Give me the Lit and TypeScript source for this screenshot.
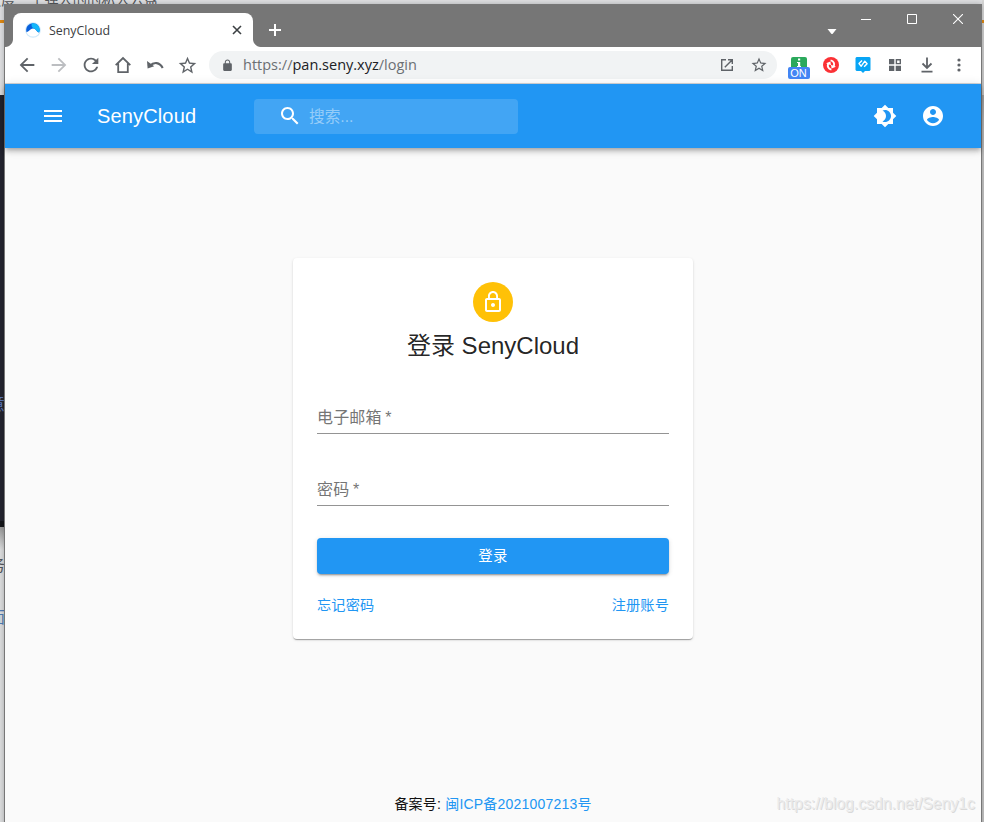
import { LitElement, html, css, svg } from "lit";
import { customElement } from "lit/decorators.js";

const STAR = "M22 9.24l-7.19-.62L12 2 9.19 8.63 2 9.24l5.46 4.73L5.82 21 12 17.27 18.18 21l-1.63-7.03L22 9.24zM12 15.4l-3.76 2.27 1-4.28-3.32-2.88 4.38-.38L12 6.1l1.71 4.04 4.38.38-3.32 2.88 1 4.28L12 15.4z";
const icon = (d: string, size = 24) =>
  html`<svg width=${size} height=${size} viewBox="0 0 24 24" fill="currentColor">${svg`<path d=${d} />`}</svg>`;

const ICONS = {
  back: "M20 11H7.83l5.59-5.59L12 4l-8 8 8 8 1.41-1.41L7.83 13H20v-2z",
  forward: "M12 4l-1.41 1.41L16.17 11H4v2h12.17l-5.58 5.59L12 20l8-8z",
  reload: "M17.65 6.35C16.2 4.9 14.21 4 12 4c-4.42 0-7.99 3.58-7.99 8s3.57 8 7.99 8c3.73 0 6.84-2.55 7.73-6h-2.08c-.82 2.33-3.04 4-5.65 4-3.31 0-6-2.69-6-6s2.69-6 6-6c1.66 0 3.14.69 4.22 1.78L13 11h7V4l-2.35 2.35z",
  lock: "M18 8h-1V6c0-2.76-2.24-5-5-5S7 3.24 7 6v2H6c-1.1 0-2 .9-2 2v10c0 1.1.9 2 2 2h12c1.1 0 2-.9 2-2V10c0-1.1-.9-2-2-2zM8.9 8V6c0-1.71 1.39-3.1 3.1-3.1s3.1 1.39 3.1 3.1v2H8.9z",
  menu: "M3 18h18v-2H3v2zm0-5h18v-2H3v2zm0-7v2h18V6H3z",
  search: "M15.5 14h-.79l-.28-.27C15.41 12.59 16 11.11 16 9.5 16 5.91 13.09 3 9.5 3S3 5.91 3 9.5 5.91 16 9.5 16c1.61 0 3.09-.59 4.23-1.57l.27.28v.79l5 4.99L20.49 19l-4.99-5zm-6 0C7.01 14 5 11.99 5 9.5S7.01 5 9.5 5 14 7.01 14 9.5 11.99 14 9.5 14z",
  brightness: "M20 8.69V4h-4.69L12 .69 8.69 4H4v4.69L.69 12 4 15.31V20h4.69L12 23.31 15.31 20H20v-4.69L23.31 12 20 8.69zM12 18c-.89 0-1.74-.2-2.5-.55C11.56 16.5 13 14.42 13 12s-1.44-4.5-3.5-5.45C10.26 6.2 11.11 6 12 6c3.31 0 6 2.69 6 6s-2.69 6-6 6z",
  account: "M12 2C6.48 2 2 6.48 2 12s4.48 10 10 10 10-4.48 10-10S17.52 2 12 2zm0 3c1.66 0 3 1.34 3 3s-1.34 3-3 3-3-1.34-3-3 1.34-3 3-3zm0 14.2c-2.5 0-4.71-1.28-6-3.22.03-1.99 4-3.08 6-3.08 1.99 0 5.97 1.09 6 3.08-1.29 1.94-3.5 3.22-6 3.22z",
  lockOutline: "M12 17c1.1 0 2-.9 2-2s-.9-2-2-2-2 .9-2 2 .9 2 2 2zm6-9h-1V6c0-2.76-2.24-5-5-5S7 3.24 7 6v2H6c-1.1 0-2 .9-2 2v10c0 1.1.9 2 2 2h12c1.1 0 2-.9 2-2V10c0-1.1-.9-2-2-2zM8.9 6c0-1.71 1.39-3.1 3.1-3.1s3.1 1.39 3.1 3.1v2H8.9V6zM18 20H6V10h12v10z",
};

@customElement("browser-chrome")
export class BrowserChrome extends LitElement {
  static styles = css`
    :host { display: block; font-family: "Open Sans", "Noto Sans CJK SC", sans-serif; }
    svg { display: block; flex: none; }
    .tabs { height: 42px; background: #767676; display: flex; color: #fff; padding-left: 8px; }
    .tab { width: 240px; height: 34px; margin-top: 8px; box-sizing: border-box; background: #fff; border-radius: 8px 8px 0 0;
      display: flex; align-items: center; padding: 0 11px 0 12px; color: #3c4043; font-size: 12.4px; position: relative; }
    .tab::before, .tab::after { content: ""; position: absolute; bottom: 0; width: 8px; height: 8px; }
    .tab::before { left: -8px; background: radial-gradient(circle at 0 0, transparent 7.5px, #fff 8.5px); }
    .tab::after { right: -8px; background: radial-gradient(circle at 100% 0, transparent 7.5px, #fff 8.5px); }
    .name { flex: 1; margin-left: 8px; }
    .plus { margin: 19px 0 0 16px; }
    .controls { margin-left: auto; display: flex; }
    .drop { margin: 24px 24px 0 0; }
    .win { display: flex; gap: 36px; padding-right: 18px; margin-top: 9px; }
    .bar { height: 36px; background: #fff; border-bottom: 1px solid #d5d7da; display: flex; align-items: center; padding: 0 6px; color: #5f6368; }
    .slot { width: 32px; display: flex; justify-content: center; flex: none; }
    .off { color: #bcbec1; }
    .omni { flex: 1; height: 28px; border-radius: 14px; background: #f1f3f4; display: flex; align-items: center; margin: 0 6px; padding-left: 12px; padding-right: 2px; }
    .url { flex: 1; margin-left: 9px; padding-bottom: 1px; font-size: 14.5px; line-height: 19px; color: #6b6f73; white-space: nowrap; }
    .host { color: #202124; }
    .ext { position: relative; }
    .on { position: absolute; left: 5px; top: 12px; width: 22px; height: 12px; border-radius: 2px; background: #4285f4; color: #fff;
      font: 11px/12px "Liberation Sans", sans-serif; text-align: center; text-indent: -1px; }
  `;
  render() {
    return html`
      <div class="tabs">
        <div class="tab">
          <svg width="16" height="16" viewBox="0 0 16 16"><circle cx="8" cy="8" r="7.8" fill="#cfe9fa" /><circle cx="8" cy="8" r="6.6" fill="#fff" /><path d="M1.6 10.2A6.7 6.7 0 0 1 8 1.2c3.8 0 6.8 3 6.7 7-.1 1-.4 1.8-.8 2.4-2.2-.6-3.4-4.2-5.9-4-2.7.1-3.6 2.8-6.4 3.6z" fill="#0960dc" /><path d="M7 1.3C11.3.7 15 4 14.7 8.5c-.1.8-.3 1.4-.6 1.9C12 9.6 10.8 6.6 8.3 6.2 6.6 5.6 6 3 7 1.3z" fill="#13b7fa" /></svg>
          <span class="name">SenyCloud</span>
          <svg width="10" height="10" viewBox="0 0 10 10" stroke="#3c4043" stroke-width="1.6"><path d="M1 1l8 8M9 1l-8 8" /></svg>
        </div>
        <svg class="plus" width="12" height="12" viewBox="0 0 12 12" fill="#fff"><path d="M5 0h2v5h5v2H7v5H5V7H0V5h5z" /></svg>
        <div class="controls">
          <svg class="drop" width="10" height="6" viewBox="0 0 10 6" fill="#fff"><path d="M.5 0h9L5.5 5h-1z" /></svg>
          <div class="win">
            <svg width="10" height="11" viewBox="0 0 10 11" fill="#fff"><path d="M0 5h10v1H0z" /></svg>
            <svg width="10" height="10" viewBox="0 0 10 10" fill="none" stroke="#fff"><path d="M.5.5h9v9h-9z" /></svg>
            <svg width="10" height="10" viewBox="0 0 10 10" stroke="#fff" stroke-width="1.1"><path d="M0 0l10 10M10 0L0 10" /></svg>
          </div>
        </div>
      </div>
      <div class="bar">
        <div class="slot">${icon(ICONS.back, 22)}</div>
        <div class="slot off">${icon(ICONS.forward, 22)}</div>
        <div class="slot">${icon(ICONS.reload, 22)}</div>
        <div class="slot"><svg width="18" height="18" viewBox="0 0 18 18" fill="none" stroke="currentColor" stroke-width="1.8"><path d="M1.7 9.2L9 2l7.3 7.2M4.2 7.4v8.7h9.6V7.4" /></svg></div>
        <div class="slot"><svg width="18" height="14" viewBox="0 0 18 14"><path d="M1 3l.6 7.4 6.6-2.2z" fill="currentColor" /><path d="M3.7 8C8 3.6 13.6 4 16.7 10" fill="none" stroke="currentColor" stroke-width="2.1" /></svg></div>
        <div class="slot">${icon(STAR, 21)}</div>
        <div class="omni">
          ${icon(ICONS.lock, 13)}
          <span class="url">https://<span class="host">pan.seny.xyz</span>/login</span>
          <div class="slot"><svg width="14" height="14" viewBox="0 0 14 14" fill="none" stroke="currentColor" stroke-width="1.4"><path d="M6 1.7H1.7v10.6h10.6V8M8 1.7h4.3V6M12.3 1.7l-7.5 7.5" /></svg></div>
          <div class="slot">${icon(STAR, 18)}</div>
        </div>
        <div class="slot ext">
          <svg width="16" height="20" viewBox="0 0 16 20"><rect y="2" width="16" height="15" rx="2" fill="#2ba95c" /><path d="M7 3.5h2.2v2H7zM6 7h3.2v4H10v1H6v-1h1V8H6z" fill="#fff" /></svg>
          <span class="on">ON</span>
        </div>
        <div class="slot"><svg width="16" height="16" viewBox="0 0 16 16"><circle cx="8" cy="8" r="8" fill="#fb3135" /><path d="M8.4 12.6C5.2 12 4.2 9.4 5.2 6.4M7.6 3.4c3.2.6 4.2 3.2 3.2 6.2" fill="none" stroke="#fff" stroke-width="1.9" /><path d="M3 6.2l4.4-1.6.6 3.6zM13 9.8l-4.4 1.6-.6-3.6z" fill="#fff" /></svg></div>
        <div class="slot"><svg width="16" height="16" viewBox="0 0 16 16"><path d="M1.5 0h13l1 1v12l-1 1H10l-2 2-2-2H1.5l-1-1V1z" fill="#08a5f5" /><path d="M7 3.6L4 6.6l2.2 2.6 3.6-5 2.3 2.5-3 3" fill="none" stroke="#fff" stroke-width="1.4" stroke-linejoin="round" /></svg></div>
        <div class="slot"><svg width="12" height="12" viewBox="0 0 12 12" fill="currentColor"><path d="M0 0h5.3v5.3H0zM0 6.7h5.3V12H0zM6.7 6.7H12V12H6.7z" /><path d="M7.4.7h3.9v3.9H7.4z" fill="none" stroke="currentColor" stroke-width="1.4" /></svg></div>
        <div class="slot"><svg width="12" height="16" viewBox="0 0 12 16" fill="none" stroke="currentColor" stroke-width="1.8"><path d="M6 .5v10M1.5 6.5L6 11l4.5-4.5M.5 14.6h11" /></svg></div>
        <div class="slot"><svg width="4" height="14" viewBox="0 0 4 14" fill="currentColor"><circle cx="2" cy="2" r="1.6" /><circle cx="2" cy="7" r="1.6" /><circle cx="2" cy="12" r="1.6" /></svg></div>
      </div>`;
  }
}

@customElement("app-root")
export class AppRoot extends LitElement {
  static styles = css`
    :host { display: block; position: relative; width: 984px; height: 822px; overflow: hidden; background: #dedfe0;
      font-family: "Liberation Sans", "Noto Sans CJK SC", sans-serif; }
    svg { display: block; flex: none; }
    .desk { position: absolute; inset: 0; overflow: hidden; background: linear-gradient(#e0e1e3 0 95px, #23242f 95px 521px, #15161a 521px 527px, #999 527px, #dddedf 550px); }
    .right { position: absolute; left: 982px; top: 0; width: 2px; height: 822px; background: linear-gradient(#d8d8d8 0 20px, #e08a13 20px 23px, #d0d0d0 23px 95px, #aaa 95px, #c6c6c6 130px); }
    .stripe { position: absolute; left: 0; top: 20px; width: 4px; height: 3px; background: #e08a13; }
    .behind { position: absolute; white-space: nowrap; font-size: 16px; line-height: 20px; color: #55585c; }
    .t1 { left: -13px; top: -10px; font-size: 14.3px; }
    .t2 { left: -11px; top: 395px; color: #5c77b8; }
    .t3 { left: -11px; top: 556px; }
    .t4 { left: -11px; top: 608px; color: #527db5; }
    .window { position: relative; margin-left: 4px; top: 4px; width: 978px; height: 830px; box-sizing: border-box; border: 1px solid #777;
      background: #fafafa; display: flex; flex-direction: column; box-shadow: 0 0 6px rgba(0,0,0,.25); }
    .appbar { height: 64px; flex: none; background: #2196f3; color: #fff; display: flex; align-items: center; padding: 0 36px;
      box-shadow: 0 2px 4px -1px rgba(0,0,0,.2), 0 4px 5px rgba(0,0,0,.14), 0 1px 10px rgba(0,0,0,.12); }
    .brand { margin-left: 32px; width: 157px; font-size: 20px; line-height: 32px; letter-spacing: .15px; }
    .search { width: 264px; height: 35px; box-sizing: border-box; padding-left: 24px; display: flex; align-items: center; border-radius: 4px; background: rgba(255,255,255,.15); }
    .hint { margin-left: 7px; margin-top: -2px; font-size: 15.7px; color: rgba(255,255,255,.46); }
    .actions { margin-left: auto; display: flex; gap: 24px; }
    .main { flex: 1; display: flex; flex-direction: column; align-items: center; padding-top: 110px; }
    .card { width: 400px; height: 381px; flex: none; box-sizing: border-box; padding: 24px; border-radius: 4px; background: #fff; display: flex; flex-direction: column; align-items: center;
      box-shadow: 0 2px 1px -1px rgba(0,0,0,.2), 0 1px 1px rgba(0,0,0,.14), 0 1px 3px rgba(0,0,0,.12); }
    .avatar { width: 40px; height: 40px; border-radius: 50%; background: #ffc107; color: #fff; display: grid; place-items: center; }
    .title { margin: 8px 0 0; font-weight: 400; font-size: 24px; line-height: 32px; color: rgba(0,0,0,.87); white-space: nowrap; }
    .field { flex: none; width: 100%; height: 48px; margin-top: 24px; box-sizing: border-box; border-bottom: 1px solid #949494; color: #757575;
      font-size: 16px; letter-spacing: .15px; word-spacing: -1px; line-height: 20px; padding-top: 22px; }
    .submit { margin-top: 32px; width: 100%; height: 36px; flex: none; border: 0; padding: 0; border-radius: 4px; background: #2196f3; color: #fff; font: 400 14.4px/24px "Liberation Sans", "Noto Sans CJK SC", sans-serif; letter-spacing: .4px;
      box-shadow: 0 3px 1px -2px rgba(0,0,0,.2), 0 2px 2px rgba(0,0,0,.14), 0 1px 5px rgba(0,0,0,.12); }
    .links { width: 100%; margin-top: 21px; display: flex; justify-content: space-between; font-size: 14.2px; line-height: 20px; letter-spacing: .15px; color: #2196f3; }
    .footer { margin-top: 155px; font-size: 14px; letter-spacing: .2px; line-height: 20px; color: #111; white-space: nowrap; }
    .icp { color: #2196f3; }
    .mark { position: absolute; right: 9px; top: 794px; font-size: 15.8px; line-height: 20px; color: #ebebeb; text-shadow: 1px 1px 0 #d9d9d9; white-space: nowrap; }
  `;
  render() {
    return html`
      <div class="desk">
        <span class="behind t1">度度一个弹人的的私人云盘</span>
        <div class="stripe"></div>
        <span class="behind t2">意</span><span class="behind t3">务</span><span class="behind t4">面</span>
        <div class="right"></div>
      </div>
      <div class="window">
        <browser-chrome></browser-chrome>
        <header class="appbar">
          ${icon(ICONS.menu)}
          <span class="brand">SenyCloud</span>
          <div class="search">${icon(ICONS.search)}<span class="hint">搜索...</span></div>
          <div class="actions">${icon(ICONS.brightness)}${icon(ICONS.account)}</div>
        </header>
        <main class="main">
          <section class="card">
            <div class="avatar">${icon(ICONS.lockOutline)}</div>
            <h1 class="title">登录 SenyCloud</h1>
            <div class="field">电子邮箱 *</div>
            <div class="field">密码 *</div>
            <button class="submit">登录</button>
            <div class="links"><span>忘记密码</span><span>注册账号</span></div>
          </section>
          <footer class="footer">备案号: <span class="icp">闽ICP备2021007213号</span></footer>
        </main>
      </div>
      <div class="mark">https://blog.csdn.net/Seny1c</div>`;
  }
}
